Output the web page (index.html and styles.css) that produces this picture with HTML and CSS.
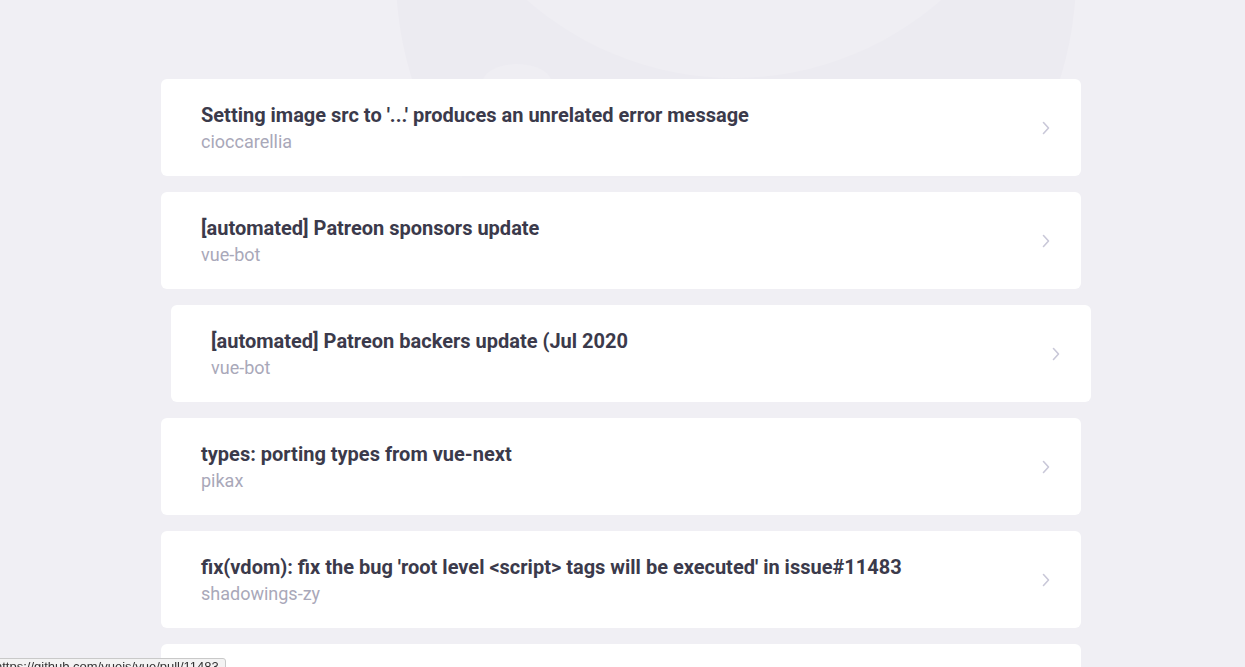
FILE: index.html
```html
<!DOCTYPE html>
<html lang="en">
<head>
<meta charset="utf-8">
<title>Pull requests</title>
<link rel="stylesheet" href="styles.css">
</head>
<body>
<div class="watermark" aria-hidden="true">
  <div class="wm-outer"></div>
  <div class="wm-inner"></div>
  <div class="wm-tail"></div>
</div>
<main class="list">
  <a class="card" href="#">
    <div class="card-text">
      <div class="card-title">Setting image src to '...' produces an unrelated error message</div>
      <div class="card-author">cioccarellia</div>
    </div>
    <svg class="chev" width="8" height="14" viewBox="0 0 8 14"><path d="M1.5 1.5 L6.5 7 L1.5 12.5" fill="none" stroke="#c9c8d8" stroke-width="1.6" stroke-linecap="round" stroke-linejoin="round"/></svg>
  </a>
  <a class="card" href="#">
    <div class="card-text">
      <div class="card-title">[automated] Patreon sponsors update</div>
      <div class="card-author">vue-bot</div>
    </div>
    <svg class="chev" width="8" height="14" viewBox="0 0 8 14"><path d="M1.5 1.5 L6.5 7 L1.5 12.5" fill="none" stroke="#c9c8d8" stroke-width="1.6" stroke-linecap="round" stroke-linejoin="round"/></svg>
  </a>
  <a class="card is-hover" href="#">
    <div class="card-text">
      <div class="card-title">[automated] Patreon backers update (Jul 2020</div>
      <div class="card-author">vue-bot</div>
    </div>
    <svg class="chev" width="8" height="14" viewBox="0 0 8 14"><path d="M1.5 1.5 L6.5 7 L1.5 12.5" fill="none" stroke="#c9c8d8" stroke-width="1.6" stroke-linecap="round" stroke-linejoin="round"/></svg>
  </a>
  <a class="card" href="#">
    <div class="card-text">
      <div class="card-title">types: porting types from vue-next</div>
      <div class="card-author">pikax</div>
    </div>
    <svg class="chev" width="8" height="14" viewBox="0 0 8 14"><path d="M1.5 1.5 L6.5 7 L1.5 12.5" fill="none" stroke="#c9c8d8" stroke-width="1.6" stroke-linecap="round" stroke-linejoin="round"/></svg>
  </a>
  <a class="card" href="#">
    <div class="card-text">
      <div class="card-title">fix(vdom): fix the bug 'root level &lt;script&gt; tags will be executed' in issue#11483</div>
      <div class="card-author">shadowings-zy</div>
    </div>
    <svg class="chev" width="8" height="14" viewBox="0 0 8 14"><path d="M1.5 1.5 L6.5 7 L1.5 12.5" fill="none" stroke="#c9c8d8" stroke-width="1.6" stroke-linecap="round" stroke-linejoin="round"/></svg>
  </a>
  <a class="card" href="#">
    <div class="card-text">
      <div class="card-title">&nbsp;</div>
      <div class="card-author">&nbsp;</div>
    </div>
  </a>
</main>
<div class="statusbar">https://github.com/vuejs/vue/pull/11483</div>
</body>
</html>
```
FILE: styles.css
```css
html, body {
  margin: 0;
  padding: 0;
  height: 100%;
  overflow: hidden;
}
body {
  background: #f0eff4;
  font-family: Roboto, "Liberation Sans", sans-serif;
  position: relative;
}
.watermark {
  position: absolute;
  left: 0;
  top: 0;
  width: 100%;
  height: 190px;
  z-index: 0;
  overflow: hidden;
  -webkit-mask-image: linear-gradient(to bottom, #000 45%, transparent 95%);
  mask-image: linear-gradient(to bottom, #000 45%, transparent 95%);
}
.wm-outer {
  position: absolute;
  left: 396px;
  top: -364px;
  width: 680px;
  height: 680px;
  border-radius: 50%;
  background: #ecebf1;
}
.wm-inner {
  position: absolute;
  left: 420px;
  top: -550px;
  width: 628px;
  height: 628px;
  border-radius: 50%;
  background: #efeef3;
}
.wm-tail {
  position: absolute;
  left: 482px;
  top: 64px;
  width: 70px;
  height: 40px;
  border-radius: 50%;
  background: #efeef3;
}
.list {
  position: relative;
  z-index: 1;
  width: 920px;
  margin: 79px 0 0 161px;
  display: flex;
  flex-direction: column;
  gap: 16px;
}
.card {
  display: flex;
  align-items: center;
  justify-content: space-between;
  background: #ffffff;
  border-radius: 6px;
  padding: 23px 31px 22px 40px;
  text-decoration: none;
  flex-shrink: 0;
}
.card.is-hover {
  transform: translateX(10px);
}
.card-title {
  font-size: 20px;
  line-height: 26px;
  font-weight: 700;
  color: #3b3a4b;
}
.card-author {
  margin-top: 2px;
  font-size: 18px;
  line-height: 24px;
  color: #a9a8b9;
}
.chev {
  display: block;
  flex-shrink: 0;
}
.statusbar {
  position: fixed;
  left: -12px;
  bottom: -14px;
  height: 21px;
  padding: 0 6px;
  background: #f3f3f3;
  border: 1px solid #c9c9c9;
  border-radius: 0 3px 0 0;
  font-family: "Liberation Sans", Arial, sans-serif;
  font-size: 13px;
  line-height: 16px;
  color: #333;
  z-index: 5;
  white-space: nowrap;
}
```
